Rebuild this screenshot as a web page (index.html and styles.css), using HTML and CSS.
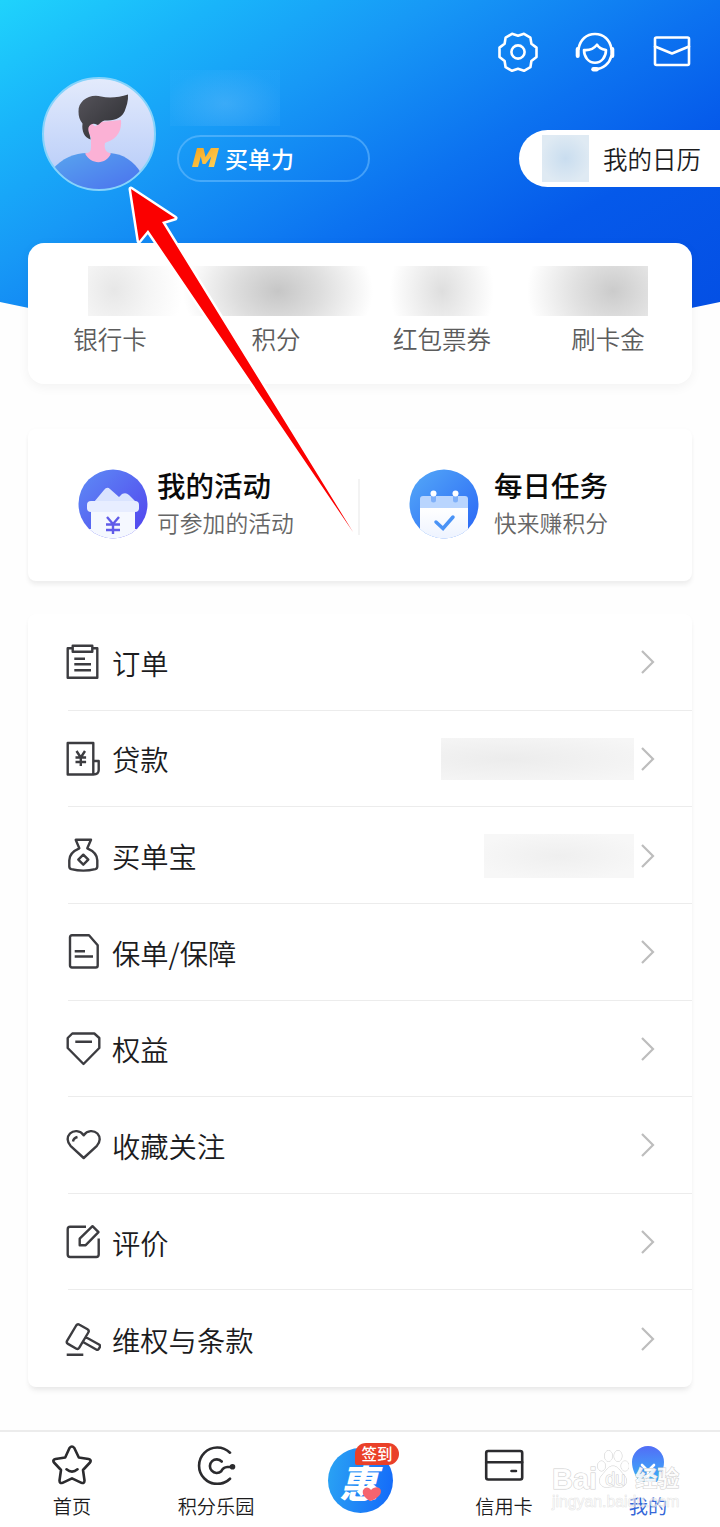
FILE: index.html
```html
<!DOCTYPE html>
<html lang="zh-CN">
<head>
  <meta charset="UTF-8">
  <title>我的</title>
  <link rel="stylesheet" href="styles.css">
</head>
<body>
  <div class="page">
    <header class="header">
      <div class="top-icons">
        <svg width="44" height="44" viewBox="0 0 44 44" class="line">
          <path d="M22 5.8 16 3.8 9.6 7.6 8.6 13.8 3.5 17.6V27l5.1 4 1 6.2 6.4 3.6 6-2.1 6 2.1 6.4-3.6 1-6.2 5.1-4V17.6l-5.1-3.8-1-6.2L28 3.8Z"/>
          <circle cx="22" cy="22" r="6.6"/>
        </svg>
        <svg width="44" height="44" viewBox="0 0 44 44" class="line">
          <path d="M5.500 19C7 9.500 13.500 4 22 4s15 5.500 16.500 15"/>
          <path d="M38.300 26C36.500 33.500 30.500 39 22 39.300"/>
          <path d="M4.700 19v7M39.300 19v7" stroke-width="4"/>
          <path d="M20.500 39.300h3" stroke-width="4.500"/>
          <path d="M11 20c4.500.5 9.500-1 13-5.300 1.600 3 4.200 4.600 9 5.300 0 7-4.500 12.700-11 12.700S11 27 11 20Z"/>
        </svg>
        <svg width="44" height="44" viewBox="0 0 44 44" class="line">
          <rect x="5" y="7.500" width="34" height="27.500" rx="1.500"/>
          <path d="M5 16.500 22 23.500l17-7"/>
        </svg>
      </div>
      <div class="profile">
        <svg class="avatar" width="114" height="114" viewBox="0 0 114 114">
          <defs>
            <linearGradient id="face-bg" x1="0" y1="0" x2="0" y2="1"><stop offset="0" stop-color="#e4ebfc"/><stop offset="1" stop-color="#b3c9f8"/></linearGradient>
            <linearGradient id="shirt" x1="0" y1="0" x2="1" y2="1"><stop offset="0" stop-color="#58a5ee"/><stop offset="1" stop-color="#4a70ee"/></linearGradient>
            <linearGradient id="hair" x1="0" y1="0" x2="1" y2="1"><stop offset="0" stop-color="#55535a"/><stop offset="1" stop-color="#2b2c30"/></linearGradient>
            <clipPath id="round"><circle cx="57" cy="57" r="56"/></clipPath>
          </defs>
          <g clip-path="url(#round)">
            <rect width="114" height="114" fill="url(#face-bg)"/>
            <path d="M10 93C20 81 33 76 45 76h23c13 1 24 8 31 20v18H10Z" fill="url(#shirt)"/>
            <path d="M48 46c3 0 4 4 6 3l5-4 20-2c1 9-3 19-14 22l-2 1c-1 5 0 9 6 10.500-5 11.500-20 11.500-26 0 5-1 6-2 6-7V60c-3-3-5-12-1-14Z" fill="#fbb1d5"/>
            <path d="M86 17.500c-9 3-19 4-27 2-12-3-23 5-22.500 15 0 5 1 8 4 12-1 8 2 14 8 16 0-5-3-8-2-12 1-3 5-5 8-3 2 2 4-3 8-4 9 0 16-1 20-9 2-5 4-11 3.500-17Z" fill="url(#hair)"/>
          </g>
          <circle cx="57" cy="57" r="56" fill="none" stroke="#86d3fb" stroke-width="2"/>
        </svg>
        <div class="user">
          <div class="user-name"></div>
          <div class="level">
            <svg width="27" height="20" viewBox="0 0 27 20">
              <defs><linearGradient id="gold" x1="0" y1="0" x2="1" y2="1"><stop offset="0" stop-color="#f5a31c"/><stop offset="1" stop-color="#ffd45c"/></linearGradient></defs>
              <path d="M5 0h6.500l2 9 5.500-9h8l-5 19h-5.500l2.700-10.500L13.500 16h-3L8.800 8.500 6 19H0Z" fill="url(#gold)"/>
            </svg>
            <span>买单力</span>
          </div>
        </div>
        <div class="calendar"><i></i><span>我的日历</span></div>
      </div>
    </header>

    <section class="card assets">
      <div class="amounts"></div>
      <div class="asset-names">
        <span>银行卡</span><span>积分</span><span>红包票券</span><span>刷卡金</span>
      </div>
    </section>

    <section class="card promos">
      <div class="promo">
        <svg width="70" height="70" viewBox="0 0 70 70">
          <defs>
            <linearGradient id="violet" x1="0" y1="0" x2="1" y2="1"><stop offset="0" stop-color="#5e8df5"/><stop offset="1" stop-color="#5140ee"/></linearGradient>
            <clipPath id="disc"><circle cx="35" cy="35" r="34.500"/></clipPath>
          </defs>
          <g clip-path="url(#disc)">
            <rect width="70" height="70" fill="url(#violet)"/>
            <path d="M0 60h13v10H0ZM57 60h13v10H57Z" fill="#fff"/>
            <path d="M16 33 26 21q3-4 6-1l9 8 3-3q4-2 7 1l8 8Z" fill="#d9e3fe"/>
            <path d="M13 41h44v29H13Z" fill="#f5f8ff"/>
            <rect x="9" y="32" width="52" height="11" rx="4" fill="#e7edff"/>
          </g>
          <path d="M29 48l6 7 6-7M28 55.500h14M28 61h14M35 55v10" fill="none" stroke="#605be9" stroke-width="2.400"/>
        </svg>
        <div><h3>我的活动</h3><p>可参加的活动</p></div>
      </div>
      <div class="promo">
        <svg width="70" height="70" viewBox="0 0 70 70">
          <defs>
            <linearGradient id="azure" x1="0" y1="0" x2="1" y2="1"><stop offset="0" stop-color="#55aaf8"/><stop offset="1" stop-color="#2864f5"/></linearGradient>
            <linearGradient id="paper" x1="0" y1="0" x2="0" y2="1"><stop offset="0" stop-color="#fff"/><stop offset="1" stop-color="#edf3ff"/></linearGradient>
          </defs>
          <g clip-path="url(#disc)">
            <rect width="70" height="70" fill="url(#azure)"/>
            <path d="M0 60h12v10H0ZM58 60h12v10H58Z" fill="#fff"/>
            <rect x="11" y="27" width="48" height="50" rx="3" fill="#b9d5fe"/>
            <path d="M11 39h48v31H11Z" fill="url(#paper)"/>
          </g>
          <path d="M24.500 25v6M46.500 25v6" stroke="#7fb0f9" stroke-width="5" stroke-linecap="round"/>
          <circle cx="24.500" cy="24.500" r="3" fill="#fff"/><circle cx="46.500" cy="24.500" r="3" fill="#fff"/>
          <path d="M27 53l7 6.500L44 48" fill="none" stroke="#4a93f6" stroke-width="3.500" stroke-linecap="round"/>
        </svg>
        <div><h3>每日任务</h3><p>快来赚积分</p></div>
      </div>
    </section>

    <ul class="card menu">
      <li>
        <svg class="icon" viewBox="0 0 36 36"><path d="M7.700 4.300H2.700v29.400h29.600V4.300h-5M7.700 1.700h19.600v6H7.700ZM9.300 14.700H20M9.300 20.300H26M9.300 26.300H26"/></svg>
        <span>订单</span>
        <svg class="arrow" viewBox="0 0 14 24"><path d="M1 1l11 11L1 23"/></svg>
      </li>
      <li>
        <svg class="icon" viewBox="0 0 36 36"><path d="M2.700 2h25.600v31.500H2.700ZM28.300 20h5.400v9q0 4.500-5.400 4.500M11.500 10l4.300 6.500L20 10M10.500 16.500h10.600M10.500 21h10.600M15.800 16v9"/></svg>
        <span>贷款</span>
        <i class="value wide"></i>
        <svg class="arrow" viewBox="0 0 14 24"><path d="M1 1l11 11L1 23"/></svg>
      </li>
      <li>
        <svg class="icon" viewBox="0 0 36 36"><path d="M10.700 1.800H26l-3.700 8.500c7 3 10 6.700 10 12v6.200q0 2-2 2.600c-8 2-16 2-24 0q-2-.6-2-2.600v-6.200c0-5.300 3-9 10-12ZM18.300 16.700l5 5-5 5-5-5Z"/></svg>
        <span>买单宝</span>
        <i class="value"></i>
        <svg class="arrow" viewBox="0 0 14 24"><path d="M1 1l11 11L1 23"/></svg>
      </li>
      <li>
        <svg class="icon" viewBox="0 0 36 36"><path d="M7 1.300h17l8.700 10v20.200q0 2-2 2H7q-2 0-2-2V3.300q0-2 2-2ZM9.700 17.200H20M9.700 22.500H28"/></svg>
        <span>保单/保障</span>
        <svg class="arrow" viewBox="0 0 14 24"><path d="M1 1l11 11L1 23"/></svg>
      </li>
      <li>
        <svg class="icon" viewBox="0 0 36 36"><path d="M7.300 2.500h22l5 4.500v10L18.500 33 2.700 17V7ZM10.300 10.700H27"/></svg>
        <span>权益</span>
        <svg class="arrow" viewBox="0 0 14 24"><path d="M1 1l11 11L1 23"/></svg>
      </li>
      <li>
        <svg class="icon" viewBox="0 0 36 36"><path d="M18.700 8.200C15 3 8.500 3.200 5 6.500c-3.300 3.500-3 8.500.5 12.300L18.700 31l13.200-12.200c3.500-3.800 3.700-8.800.5-12.300-3.500-3.300-10-3.500-13.700 1.700ZM8 14.500q.5-3.500 4.500-4.500"/></svg>
        <span>收藏关注</span>
        <svg class="arrow" viewBox="0 0 14 24"><path d="M1 1l11 11L1 23"/></svg>
      </li>
      <li>
        <svg class="icon" viewBox="0 0 36 36"><path d="M21 2.800H5.200q-2.500 0-2.500 2.500v25.200q0 2.500 2.500 2.500h26q2.500 0 2.500-2.500V14.500M27.500 2.200l6 6-12.800 13h-6v-6.500Z"/></svg>
        <span>评价</span>
        <svg class="arrow" viewBox="0 0 14 24"><path d="M1 1l11 11L1 23"/></svg>
      </li>
      <li>
        <svg class="icon" viewBox="0 0 36 36"><path d="M14.500 3.700l8 4.500q2 1.300.8 3.300l-9 15.200q-1.300 2-3.300.8l-8-4.600q-2-1.200-.8-3.200l9-15.200q1.300-2 3.300-.8ZM20.500 16l13.500 7.500q1.700 1 .8 2.600l-1 1.800q-1 1.500-2.600.6L18 21M1.700 33.700h16.600"/></svg>
        <span>维权与条款</span>
        <svg class="arrow" viewBox="0 0 14 24"><path d="M1 1l11 11L1 23"/></svg>
      </li>
    </ul>

    <nav class="tabs">
      <a>
        <svg class="tab-icon" viewBox="0 0 40 40"><path d="M17.500 3q2.400-3 4.800 0l4.500 9.500 9.700 1.500q3.300 1 1.500 3.500L31 25l1.500 10.500q0 3.300-3 2.300L20 33.300l-9.500 4.500q-3 1-3-2.300L9 25l-7-7.500q-1.800-2.500 1.500-3.500l9.700-1.500ZM14.500 24.300q5.500 4.500 11 0"/></svg>
        <span>首页</span>
      </a>
      <a>
        <svg class="tab-icon" viewBox="0 0 40 40"><path d="M34 7.700a18.200 18.200 0 1 0 0 26M25.700 16.500a6.800 6.800 0 1 0-.4 9.700q2-4 6-4.200h5"/><circle cx="36.500" cy="21.800" r="1.500"/></svg>
        <span>积分乐园</span>
      </a>
      <a class="deal">
        <b>惠</b>
        <svg width="20" height="16" viewBox="0 0 20 16"><path d="M8 15C2 11 0 8 1 4.500 2.500.5 7 .5 9 4c3-3.500 8-3.500 9.500-.5C20.500 8 15 13 8 15Z" fill="#f5646e"/></svg>
        <em>签到</em>
      </a>
      <a>
        <svg class="tab-icon" viewBox="0 0 40 40"><rect x="2.200" y="6" width="36" height="28.500" rx="2"/><path d="M2.200 17.300h36M27.500 26H32"/></svg>
        <span>信用卡</span>
      </a>
      <a class="active">
        <svg class="tab-icon" viewBox="0 0 40 40">
          <defs><linearGradient id="me" x1="0" y1="0" x2="0" y2="1"><stop offset="0" stop-color="#526df6"/><stop offset=".5" stop-color="#4790f8"/><stop offset="1" stop-color="#35b1fa"/></linearGradient></defs>
          <path d="M20 1a16 16 0 0 1 16 16c0 8-4 14-7 20H11C8 31 4 25 4 17A16 16 0 0 1 20 1Z" fill="url(#me)" stroke="none"/>
          <path d="M14 20l6 6 6-6M20 26v8" stroke="#fff"/>
        </svg>
        <span>我的</span>
      </a>
    </nav>
  </div>

  <!-- pointer to the avatar -->
  <svg class="pointer" width="240" height="360" viewBox="0 0 240 360">
    <path d="M11 9 55 38 42 42 233 352 28 50 19 61Z" fill="none" stroke="#fff" stroke-width="5" stroke-linejoin="round"/>
    <path d="M11 9 55 38 42 42 233 352 28 50 19 61Z" fill="#fb0000"/>
  </svg>

  <div class="watermark">
    <svg width="32" height="40" viewBox="0 0 32 40"><ellipse cx="4.500" cy="17" rx="4" ry="5"/><ellipse cx="11.500" cy="7" rx="4" ry="5.500"/><ellipse cx="21" cy="7" rx="4" ry="5.500"/><ellipse cx="28" cy="17" rx="4" ry="5"/><path d="M16 17c5 0 7 5 11 9 6 7 0 14-7 12q-4-1-8 0C5 40-1 33 5 26c4-4 6-9 11-9Z"/></svg>
    <div class="brand"><span>Bai</span><span class="du">du</span><span class="cn">经验</span></div>
    <div class="site">jingyan.baidu.com</div>
  </div>
</body>
</html>
```
FILE: styles.css
```css
* {
  box-sizing: border-box;
}
body {
  margin: 0;
  background: #fefefe;
  color: #1c1c1e;
  font-family: "Noto Sans CJK SC", sans-serif;
  font-weight: 350;
}
h3, p, ul {
  margin: 0;
  padding: 0;
}
svg {
  display: block;
  flex: none;
}
.page {
  width: 720px;
  height: 1527px;
  overflow: hidden;
  display: flex;
  flex-direction: column;
}

/* header */
.header {
  flex: none;
  height: 316px;
  padding-top: 30px;
  background: linear-gradient(149deg, #1fd3fc 0, #19b4fa 18%, #1799f6 35%, #0c72f0 58%, #0559ea 75%, #044fe4 100%);
  clip-path: polygon(0 0, 100% 0, 100% 302px, 672px 312px, 48px 312px, 0 302px);
}
.top-icons {
  display: flex;
  justify-content: flex-end;
  gap: 33px;
  padding-right: 26px;
}
.line {
  fill: none;
  stroke: #fff;
  stroke-width: 2.6;
  stroke-linecap: round;
  stroke-linejoin: round;
}
.profile {
  display: flex;
  margin-top: -4px;
  padding-left: 42px;
}
.avatar {
  margin-top: 7px;
}
.user {
  margin-left: 14px;
}
.user-name {
  width: 110px;
  height: 56px;
  background: radial-gradient(ellipse at 50% 60%, rgba(110, 190, 250, .4), rgba(80, 180, 250, .12) 75%);
}
.level {
  display: flex;
  align-items: center;
  gap: 6px;
  width: 193px;
  height: 47px;
  margin: 9px 0 0 7px;
  padding-left: 13px;
  padding-bottom: 2px;
  border: 2px solid rgba(120, 195, 255, .5);
  border-radius: 24px;
  color: #fff;
  font-size: 23px;
  font-weight: 500;
}
.calendar {
  display: flex;
  align-items: center;
  width: 201px;
  height: 57px;
  margin: 60px 0 0 auto;
  padding-left: 23px;
  border-radius: 29px 0 0 29px;
  background: #fff;
  font-size: 24.5px;
  white-space: nowrap;
}
.calendar i {
  width: 47px;
  height: 47px;
  margin-right: 14px;
  background: radial-gradient(circle, #c9ddef, #dfeaf3 75%);
}

/* cards */
.card {
  flex: none;
  width: 664px;
  margin-left: 28px;
  border-radius: 16px;
  background: #fff;
}
.assets {
  position: relative;
  height: 141px;
  margin-top: -73px;
  padding-top: 23px;
  box-shadow: 0 3px 12px rgba(0, 0, 0, .05);
}
.amounts {
  width: 560px;
  height: 50px;
  margin-left: 60px;
  background:
    radial-gradient(ellipse 68px 75px at 26px 24px, #e7e7e7, rgba(242, 242, 242, .7) 55%, transparent),
    radial-gradient(ellipse 95px 70px at 190px 25px, #c6c6c6, rgba(210, 210, 210, .75) 45%, transparent),
    radial-gradient(ellipse 52px 65px at 354px 25px, #dedede, transparent),
    radial-gradient(ellipse 86px 75px at 525px 25px, #cbcbcb, rgba(215, 215, 215, .75) 45%, transparent);
}
.asset-names {
  display: grid;
  grid-template-columns: repeat(4, 166px);
  margin-left: -1px;
  line-height: 36px;
  margin-top: 5px;
  color: #5c5c5c;
  font-size: 24.5px;
  text-align: center;
}
.promos {
  display: flex;
  height: 152px;
  margin-top: 45px;
  padding-top: 40px;
  border-radius: 8px;
  box-shadow: 0 4px 4px rgba(0, 0, 0, .06), 0 0 6px rgba(0, 0, 0, .015);
}
.promo {
  display: flex;
  width: 330px;
  padding-left: 50px;
}
.promo + .promo {
  height: 56px;
  margin-top: 10px;
  border-left: 2px solid #f3f3f3;
  padding-left: 49px;
}
.promo + .promo > * {
  margin-top: -10px;
}
.promo > div {
  padding-left: 9px;
}
.promo + .promo > div {
  padding-left: 15px;
}
.promo h3 {
  color: #0a0a0a;
  font-size: 28.5px;
  font-weight: 500;
  line-height: 32px;
}
.promo p {
  padding-top: 3px;
  color: #666;
  font-size: 22.8px;
  line-height: 37px;
}

/* menu */
.menu {
  height: 773px;
  margin-top: 33px;
  border-radius: 8px;
  list-style: none;
  box-shadow: 0 5px 6px -2px rgba(0, 0, 0, .08), 0 2px 5px rgba(0, 0, 0, .025);
}
.menu li {
  display: flex;
  align-items: center;
  height: 96.625px;
  margin-left: 40px;
  padding: 1px 37px 0 0;
  border-bottom: 1px solid #ececec;
  font-size: 28.3px;
}
.menu li:last-child {
  border-bottom: 0;
}
.menu li span {
  margin: 0 auto 0 11px;
}
.icon {
  width: 36px;
  height: 36px;
  margin-left: -3px;
  fill: none;
  stroke: #3c3c40;
  stroke-width: 2.4;
  stroke-linejoin: round;
}
.arrow {
  width: 14px;
  height: 24px;
  fill: none;
  stroke: #bdbdbd;
  stroke-width: 2.2;
}
.value {
  width: 150px;
  height: 44px;
  margin-right: 7px;
  background: radial-gradient(ellipse, #efefef, #f7f7f7 80%);
}
.value.wide {
  width: 193px;
  height: 42px;
  background: radial-gradient(ellipse at 35% 50%, #ececec, #f6f6f6 90%);
}

/* bottom tabs */
.tabs {
  display: flex;
  flex: none;
  height: 97px;
  margin-top: 43px;
  border-top: 2px solid #ececec;
  background: #fff;
}
.tabs a {
  display: flex;
  flex-direction: column;
  align-items: center;
  width: 144px;
  padding-top: 13px;
  font-size: 19.2px;
  line-height: 24px;
}
.tabs span {
  margin-top: 9px;
}
.tab-icon {
  width: 40px;
  height: 40px;
  fill: none;
  stroke: #2b2b2e;
  stroke-width: 2.6;
  stroke-linecap: round;
  stroke-linejoin: round;
}
.tabs .active {
  color: #3567d8;
  font-weight: 400;
}
.deal {
  position: relative;
}
.deal b {
  width: 65px;
  height: 65px;
  margin-top: 3px;
  border-radius: 50%;
  background: linear-gradient(100deg, #2ba5f3, #1368fa);
  color: #fff;
  font-size: 38px;
  font-style: italic;
  font-weight: 900;
  line-height: 68px;
  text-align: center;
  text-indent: -3px;
}
.deal svg {
  position: absolute;
  left: 74px;
  top: 54px;
}
.deal em {
  position: absolute;
  left: 67px;
  top: 11px;
  width: 44px;
  height: 22px;
  border-radius: 11px 11px 11px 2px;
  background: #ea4029;
  color: #fff;
  font-size: 15.5px;
  font-style: normal;
  font-weight: 500;
  line-height: 21px;
  text-align: center;
}

/* overlays */
.pointer {
  position: absolute;
  left: 120px;
  top: 180px;
}
.watermark {
  position: absolute;
  left: 552px;
  top: 1449px;
  width: 132px;
  color: rgba(255, 255, 255, .9);
  font-family: "Liberation Sans", "Noto Sans CJK SC", sans-serif;
  -webkit-text-stroke: 1px #cfcfcf;
  paint-order: stroke fill;
}
.watermark svg {
  position: absolute;
  left: 45px;
  top: 0;
  fill: rgba(255, 255, 255, .8);
  stroke: #d2d2d2;
}
.brand {
  position: relative;
  display: flex;
  align-items: center;
  height: 44px;
  padding-top: 16px;
  font-size: 29px;
  font-weight: 700;
  white-space: nowrap;
}
.brand .du {
  width: 36px;
  font-size: 18px;
  font-weight: 400;
  text-align: center;
}
.brand .cn {
  margin-top: -6px;
  margin-left: 2px;
  font-size: 22px;
}
.site {
  color: rgba(255, 255, 255, .4);
  font-size: 15.8px;
  line-height: 18px;
  -webkit-text-stroke: .6px rgba(215, 215, 215, .8);
}
```
